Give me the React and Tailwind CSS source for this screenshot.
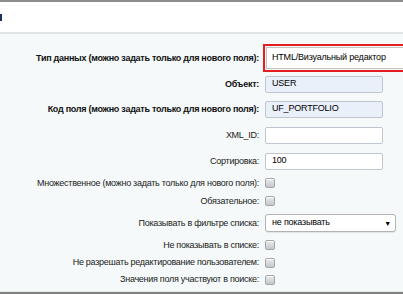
import React from "react";

const font = { fontFamily: '"Liberation Sans", Arial, sans-serif' };

function Checkbox() {
  return (
    <span className="block w-[10px] h-[10px] rounded-[2px] border border-[#a3a7ab] bg-gradient-to-b from-[#e9eaeb] to-[#c4c7ca] shadow-[inset_0_1px_0_#fff]" />
  );
}

function TextInput({ value, filled }) {
  return (
    <div
      className={`w-[118px] h-[17px] flex items-center pl-[6px] rounded-[2px] border border-[#bfc6cf] text-[9px] tracking-[-0.2px] text-black whitespace-nowrap ${
        filled ? "bg-[#e9f0fa]" : "bg-white"
      }`}
    >
      {value}
    </div>
  );
}

function Row({ label, bold, h, children }) {
  return (
    <div className={`flex items-center ${h}`}>
      <div
        className={`w-[260px] shrink-0 text-right pr-[1px] text-[9px] tracking-[-0.27px] leading-none whitespace-nowrap ${
          bold ? "font-bold text-[#111]" : "text-[#222]"
        }`}
      >
        {label}
      </div>
      <div className="pl-[5px] flex items-center">{children}</div>
    </div>
  );
}

export default function App() {
  return (
    <div className="w-[403px] h-[294px] overflow-hidden bg-white flex flex-col" style={font}>
      {/* top edge */}
      <div className="h-[2px] bg-[#8d8d8d]" />
      <div className="h-[30px] bg-white flex items-center">
        <span className="block w-[2px] h-[7px] bg-[#1f3160]" />
      </div>
      <div className="h-[2px] bg-[#e2e5e7]" />

      {/* form */}
      <div className="flex-1 bg-[#f5f9f9] flex flex-col pt-[10px]">
        <div className="flex items-center h-[28px]">
          <div className="w-[260px] shrink-0 text-right pr-[1px] text-[9px] tracking-[-0.27px] leading-none font-bold text-[#111] whitespace-nowrap">
            Тип данных (можно задать только для нового поля):
          </div>
          <div className="ml-[3px] flex-1 h-[28px] border-2 border-r-0 border-[#e41e1e] p-[1px] pr-0">
            <div className="h-full bg-white border border-r-0 border-[#c3c3c3] flex items-center pl-[5px] text-[9px] tracking-[-0.2px] text-black whitespace-nowrap">
              HTML/Визуальный редактор
            </div>
          </div>
        </div>

        <Row label="Объект:" bold h="h-[24px]">
          <TextInput value="USER" filled />
        </Row>
        <Row label="Код поля (можно задать только для нового поля):" bold h="h-[26px]">
          <TextInput value="UF_PORTFOLIO" filled />
        </Row>
        <Row label="XML_ID:" h="h-[26px]">
          <TextInput value="" />
        </Row>
        <Row label="Сортировка:" h="h-[26px]">
          <TextInput value="100" />
        </Row>
        <Row label="Множественное (можно задать только для нового поля):" h="h-[18px]">
          <Checkbox />
        </Row>
        <Row label="Обязательное:" h="h-[18px]">
          <Checkbox />
        </Row>
        <Row label="Показывать в фильтре списка:" h="h-[26px]">
          <div className="w-[131px] h-[18px] rounded-[3px] border border-[#b3b3b3] bg-white flex items-center justify-between pl-[6px] pr-[4px] text-[9px] tracking-[-0.2px] text-black whitespace-nowrap shadow-[0_1px_1px_rgba(0,0,0,0.08)]">
            <span>не показывать</span>
            <span className="text-[7px] leading-none">▼</span>
          </div>
        </Row>
        <Row label="Не показывать в списке:" h="h-[18px]">
          <Checkbox />
        </Row>
        <Row label="Не разрешать редактирование пользователем:" h="h-[17px]">
          <Checkbox />
        </Row>
        <Row label="Значения поля участвуют в поиске:" h="h-[17px]">
          <Checkbox />
        </Row>
      </div>
      <div className="h-[1px] bg-[#e6ebeb]" />
      <div className="h-[2px] bg-[#7f7f7f]" />
    </div>
  );
}
